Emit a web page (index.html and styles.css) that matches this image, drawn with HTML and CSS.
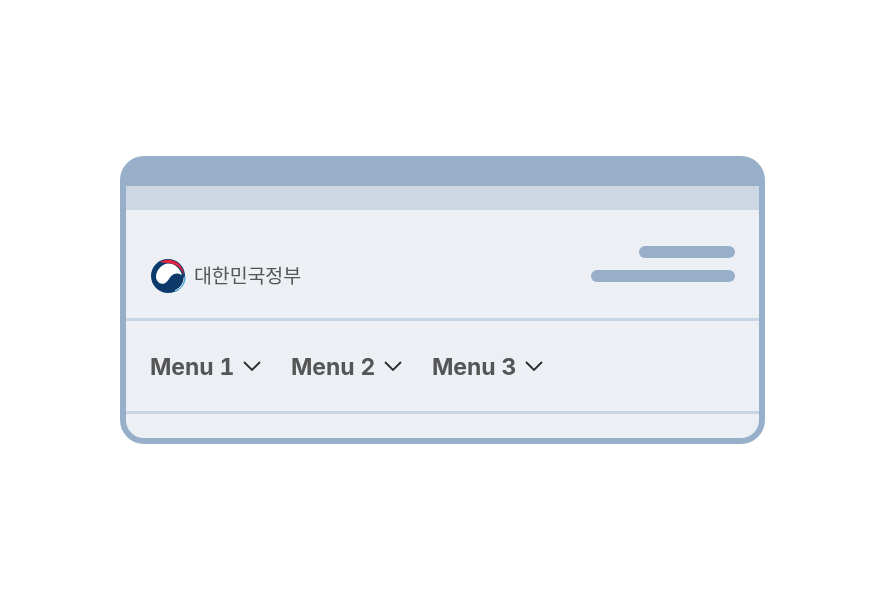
FILE: index.html
```html
<!DOCTYPE html>
<html lang="ko">
<head>
<meta charset="utf-8">
<title>Header</title>
<link rel="stylesheet" href="styles.css">
</head>
<body>
<div class="card">
  <div class="top-bar"></div>
  <div class="panel">
    <div class="sub-bar"></div>
    <div class="brand-row">
      <div class="logo">
        <svg class="emblem" width="36" height="36" viewBox="0 0 36 36">
          <circle cx="18" cy="18" r="17" fill="#0b3a6b"/>
          <path d="M6 19C6 12 12 5.500 18.500 5.500C24.500 5.500 30 10 32 17C29.500 15.500 26.500 15 24 16C21 17.200 20 20 17.500 23C15 26 11.500 26.500 9.500 25C7.500 23.500 6 21.500 6 19Z" fill="#fff"/>
          <path d="M10 4C13 2.500 15.500 1.800 18 1.800C27 1.800 33.800 9 34 17C33.500 15.500 32.800 14.300 31.800 13C29 8.500 24 5.300 18 5.100C15.500 5 12.500 4.800 10 4Z" fill="#e4243f"/>
          <path d="M34.300 19A16.300 16.300 0 0 1 25 32.700" fill="none" stroke="#fff" stroke-width="0.900"/>
          <path d="M35.300 19A17.300 17.300 0 0 1 25 33.800" fill="none" stroke="#27a6d6" stroke-width="1"/>
        </svg>
        <span class="logo-text">대한민국정부</span>
      </div>
      <div class="utility">
        <span class="pill pill-short"></span>
        <span class="pill pill-long"></span>
      </div>
    </div>
    <nav class="menu-row">
      <a class="menu-item"><span class="menu-label">Menu 1</span>
        <svg class="chev" width="18" height="10" viewBox="0 0 18 10"><path d="M1 1l8 8 8-8" fill="none" stroke="#2b2b2b" stroke-width="1.800"/></svg></a>
      <a class="menu-item"><span class="menu-label">Menu 2</span>
        <svg class="chev" width="18" height="10" viewBox="0 0 18 10"><path d="M1 1l8 8 8-8" fill="none" stroke="#2b2b2b" stroke-width="1.800"/></svg></a>
      <a class="menu-item"><span class="menu-label">Menu 3</span>
        <svg class="chev" width="18" height="10" viewBox="0 0 18 10"><path d="M1 1l8 8 8-8" fill="none" stroke="#2b2b2b" stroke-width="1.800"/></svg></a>
    </nav>
  </div>
</div>
</body>
</html>
```
FILE: styles.css
```css
* { box-sizing: border-box; }
html, body { height: 100%; }
body {
  margin: 0;
  background: #fff;
  display: flex;
  align-items: center;
  justify-content: center;
  font-family: Inter, "Noto Sans CJK KR", sans-serif;
}
.card {
  width: 645px;
  height: 288px;
  padding: 0 6px 6px;
  border-radius: 24px;
  background: #98afca;
  display: flex;
  flex-direction: column;
  will-change: transform;
}
.top-bar { height: 30px; flex: none; }
.panel {
  flex: 1;
  background: #ecf0f5;
  border-radius: 0 0 18px 18px;
  display: flex;
  flex-direction: column;
  overflow: hidden;
}
.sub-bar { height: 24px; background: #ccd7e3; flex: none; }
.brand-row {
  height: 111px;
  flex: none;
  border-bottom: 3px solid #c8d5e4;
  padding: 36px 24px 0 24px;
  display: flex;
  justify-content: space-between;
  align-items: flex-start;
}
.logo { display: flex; align-items: center; gap: 8px; margin-top: 12px; }
.emblem { display: block; flex: none; }
.logo-text {
  font-family: "Noto Sans CJK KR", sans-serif;
  font-size: 19.5px;
  letter-spacing: -0.1px;
  color: #555;
  line-height: 34px;
  margin-bottom: 2px;
}
.utility { display: flex; flex-direction: column; align-items: flex-end; gap: 12px; }
.pill { display: block; height: 12px; border-radius: 6px; background: #98afca; }
.pill-short { width: 96px; }
.pill-long { width: 144px; }
.menu-row {
  height: 93px;
  flex: none;
  border-bottom: 3px solid #c8d5e4;
  padding: 0 24px;
  display: flex;
  align-items: center;
  gap: 30px;
}
.menu-item {
  display: flex;
  align-items: center;
  gap: 10px;
  font-size: 23px;
  font-weight: 700;
  letter-spacing: -0.1px;
  font-variant-numeric: tabular-nums;
  color: #555;
}
.menu-label { width: 83px; padding-top: 2px; white-space: nowrap; }
.chev { display: block; flex: none; }
```
